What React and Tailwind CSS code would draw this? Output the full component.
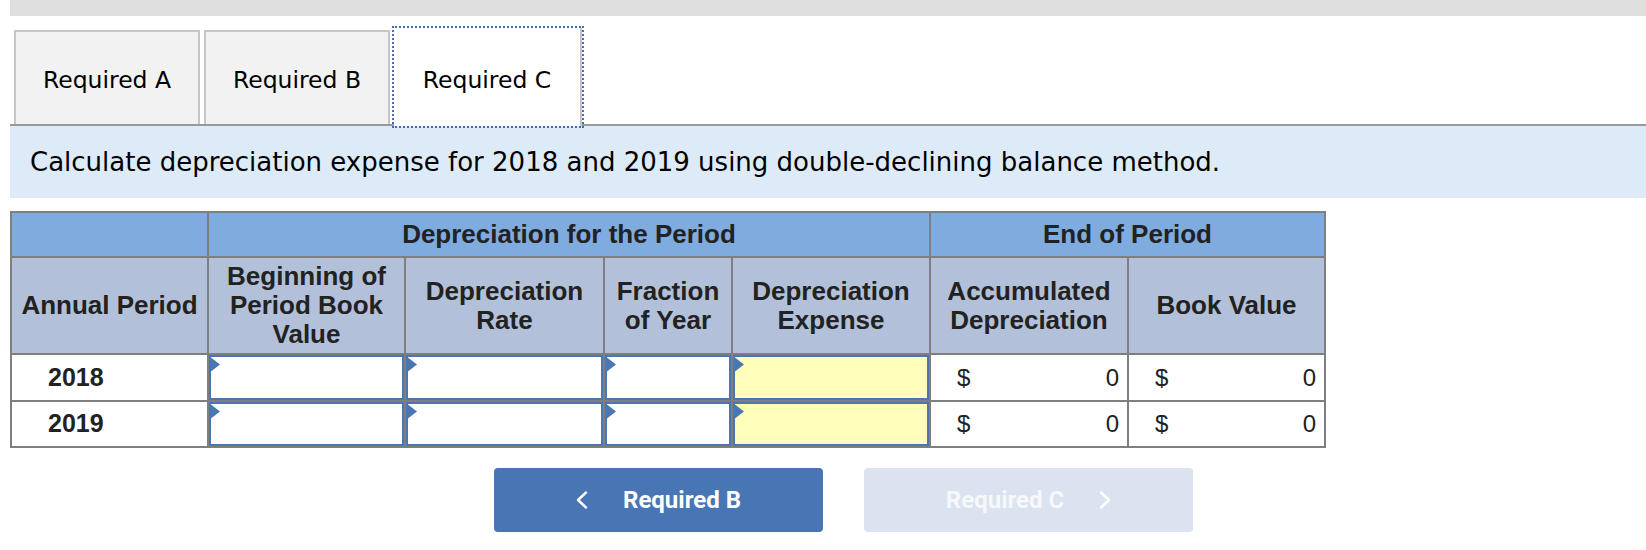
import React from "react";

const Flag = () => (
  <svg className="absolute -left-[2px] -top-[1px]" width="11" height="17" viewBox="0 0 11 17">
    <polygon points="0,0 11,8.5 0,17" fill="#4a76b4" />
  </svg>
);

const InputCell = ({ yellow }) => (
  <div className="bg-white">
    <div className={`relative h-full w-full border-2 border-[#4a76b4] ${yellow ? "bg-[#ffffbb]" : "bg-white"}`}>
      <Flag />
    </div>
  </div>
);

const MoneyCell = () => (
  <div className="flex items-center justify-between bg-white pl-[26px] pr-[8px] text-[24px] text-[#222]">
    <span>$</span>
    <span>0</span>
  </div>
);

const Chevron = ({ dir }) => (
  <svg width="12" height="18" viewBox="0 0 12 18">
    <polyline
      points={dir === "left" ? "10,1.5 2,9 10,16.5" : "2,1.5 10,9 2,16.5"}
      fill="none"
      stroke="white"
      strokeWidth="2.4"
      strokeLinecap="round"
      strokeLinejoin="round"
    />
  </svg>
);

export default function App() {
  const th1 = "flex items-center justify-center bg-[#80abdf] text-[26px] font-bold text-[#222]";
  const th2 = "flex items-center justify-center bg-[#b3c0d9] text-center text-[26px] font-bold leading-[29px] text-[#222]";
  const year = "flex items-center bg-white pl-[36px] text-[25px] font-bold text-[#222]";
  return (
    <div className="h-[550px] w-[1646px] overflow-hidden bg-white font-['Liberation_Sans',Arial,sans-serif]">
      <div className="ml-[10px] h-[16px] bg-[#dfdfdf]" />

      <div className="ml-[10px] mt-[12px] flex items-start gap-[4px] border-b-2 border-[#999999] pl-[4px] font-['DejaVu_Sans',Verdana,sans-serif] text-[23.5px] text-black">
        <div className="mt-[2px] flex h-[94px] w-[186px] items-center justify-center border-2 border-b-0 border-[#c6c6c6] bg-[#f2f2f2] pt-[5px]">
          Required A
        </div>
        <div className="mt-[2px] flex h-[94px] w-[186px] items-center justify-center border-2 border-b-0 border-[#c6c6c6] bg-[#f2f2f2] pt-[5px]">
          Required B
        </div>
        <div className="-mb-[2px] flex h-[98px] w-[188px] items-center justify-center border-r-2 border-[#c6c6c6] bg-white pt-[7px] outline-2 outline-dotted outline-[#3f6fb5]">
          Required C
        </div>
      </div>

      <div className="ml-[10px] flex h-[72px] items-center bg-[#ddebf8] pl-[20px] font-['DejaVu_Sans',Verdana,sans-serif] text-[26px] text-black">
        Calculate depreciation expense for 2018 and 2019 using double-declining balance method.
      </div>

      <div className="ml-[10px] mt-[13px] grid w-fit grid-cols-[195px_195px_197px_126px_196px_196px_195px] grid-rows-[43px_95px_45px_44px] gap-[2px] bg-[#7f7f7f] p-[2px]">
        <div className="bg-[#80abdf]" />
        <div className={`${th1} col-span-4`}>Depreciation for the Period</div>
        <div className={`${th1} col-span-2`}>End of Period</div>

        <div className={th2}>Annual Period</div>
        <div className={th2}>
          Beginning of<br />Period Book<br />Value
        </div>
        <div className={th2}>
          Depreciation<br />Rate
        </div>
        <div className={th2}>
          Fraction<br />of Year
        </div>
        <div className={th2}>
          Depreciation<br />Expense
        </div>
        <div className={th2}>
          Accumulated<br />Depreciation
        </div>
        <div className={th2}>Book Value</div>

        <div className={year}>2018</div>
        <InputCell />
        <InputCell />
        <InputCell />
        <InputCell yellow />
        <MoneyCell />
        <MoneyCell />

        <div className={year}>2019</div>
        <InputCell />
        <InputCell />
        <InputCell />
        <InputCell yellow />
        <MoneyCell />
        <MoneyCell />
      </div>

      <div className="ml-[494px] mt-[20px] flex gap-[41px] font-['Roboto',sans-serif] text-[24px] font-bold text-white">
        <div className="flex h-[64px] w-[329px] items-center justify-center gap-[35px] rounded-[4px] bg-[#4876b4]">
          <Chevron dir="left" />
          <span>Required B</span>
        </div>
        <div className="flex h-[64px] w-[329px] items-center justify-center gap-[35px] rounded-[4px] bg-[#dae3ef] text-[#f6f8fb]">
          <span>Required C</span>
          <Chevron dir="right" />
        </div>
      </div>
    </div>
  );
}
